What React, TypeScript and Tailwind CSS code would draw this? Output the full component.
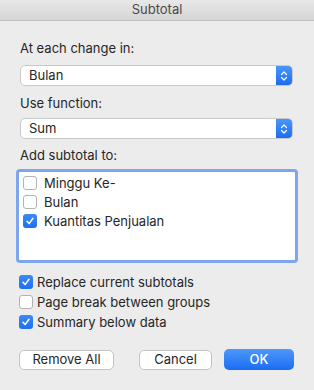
import React from "react";

function Check({ checked }: { checked: boolean }) {
  if (checked) {
    return (
      <div className="w-[14px] h-[14px] rounded-[3px] bg-gradient-to-b from-[#3b8af8] to-[#1f6ff2] flex items-center justify-center shrink-0">
        <svg width="10" height="10" viewBox="0 0 10 10" fill="none">
          <path d="M2 5.2 L4.1 7.6 L8 2.3" stroke="white" strokeWidth="1.5" strokeLinecap="round" strokeLinejoin="round" />
        </svg>
      </div>
    );
  }
  return <div className="w-[14px] h-[14px] rounded-[3px] bg-white border border-[#b3b3b3] shrink-0" />;
}

function Select({ value }: { value: string }) {
  return (
    <div className="h-[21px] flex rounded-[5px] bg-white border border-[#c9c9c9] overflow-hidden">
      <div className="flex-1 pl-[8px] text-[13px] leading-[19px] text-[#262626]">{value}</div>
      <div className="w-[16px] bg-gradient-to-b from-[#4a95f9] to-[#1b6cf2] flex items-center justify-center">
        <svg width="8" height="12" viewBox="0 0 8 12" fill="none">
          <path d="M1.5 4.5 L4 2 L6.5 4.5" stroke="white" strokeWidth="1.2" strokeLinecap="round" strokeLinejoin="round" />
          <path d="M1.5 7.5 L4 10 L6.5 7.5" stroke="white" strokeWidth="1.2" strokeLinecap="round" strokeLinejoin="round" />
        </svg>
      </div>
    </div>
  );
}

export default function App() {
  const font = { fontFamily: "Inter, 'Noto Sans', sans-serif" };
  return (
    <div className="w-[314px] h-[390px] bg-[#ececec] flex flex-col text-[#262626] overflow-hidden" style={font}>
      <div className="h-[21px] shrink-0 bg-gradient-to-b from-[#e8e8e8] to-[#d5d5d5] border-b border-[#bdbdbd] flex items-center justify-center text-[13px] text-[#4a4a4a]">
        Subtotal
      </div>
      <div className="px-[20px] flex flex-col">
        <div className="mt-[19px] text-[13px] leading-[16px]">At each change in:</div>
        <div className="mt-[9px] mr-[1px]">
          <Select value="Bulan" />
        </div>
        <div className="mt-[9px] text-[13px] leading-[16px]">Use function:</div>
        <div className="mt-[7px] mr-[1px]">
          <Select value="Sum" />
        </div>
        <div className="mt-[8px] text-[13px] leading-[16px]">Add subtotal to:</div>
        <div className="mt-[6px] -mx-[4px] h-[94px] border-[3px] border-[#7ea6ee] rounded-[4px] bg-white pt-[4px] pl-[4px] flex flex-col">
          {[
            ["Minggu Ke-", false],
            ["Bulan", false],
            ["Kuantitas Penjualan", true],
          ].map(([label, c]) => (
            <div key={label as string} className="h-[19px] flex items-start gap-[7px]">
              <Check checked={c as boolean} />
              <span className="text-[13px] leading-[14px]">{label as string}</span>
            </div>
          ))}
        </div>
        <div className="mt-[12px] flex flex-col">
          {[
            ["Replace current subtotals", true],
            ["Page break between groups", false],
            ["Summary below data", true],
          ].map(([label, c]) => (
            <div key={label as string} className="h-[20px] flex items-start gap-[4px] -ml-[1px]">
              <Check checked={c as boolean} />
              <span className="text-[13px] leading-[14px]">{label as string}</span>
            </div>
          ))}
        </div>
        <div className="mt-[14px] flex items-center">
          <div className="-ml-[1px] w-[95px] h-[20px] bg-white border border-[#c4c4c4] rounded-[5px] flex items-center justify-center text-[13px]">
            Remove All
          </div>
          <div className="ml-[25px] w-[73px] h-[20px] bg-white border border-[#c4c4c4] rounded-[5px] flex items-center justify-center text-[13px]">
            Cancel
          </div>
          <div className="ml-[12px] w-[70px] h-[21px] bg-gradient-to-b from-[#4e98fa] to-[#1a6bf2] rounded-[5px] flex items-center justify-center text-[13px] text-white font-medium">
            OK
          </div>
        </div>
      </div>
    </div>
  );
}
